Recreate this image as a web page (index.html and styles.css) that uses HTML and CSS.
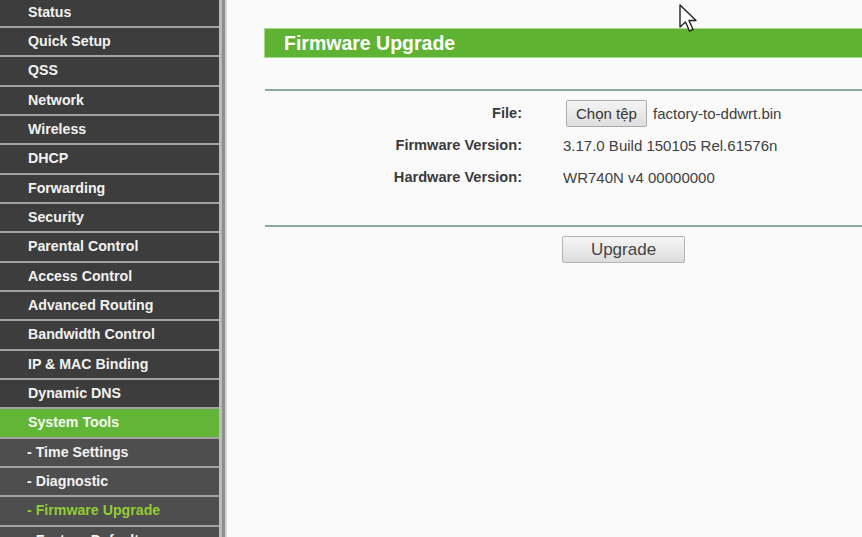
FILE: index.html
```html
<!DOCTYPE html>
<html lang="en">

<head>
  <meta charset="UTF-8">
  <meta name="viewport" content="width=device-width, initial-scale=1.0">
  <title>Firmware Upgrade</title>
  <link rel="stylesheet" href="styles.css">
</head>

<body>
  <div class="page">
    <!-- Left menu frame -->
    <div class="sidebar">
      <ul class="menu">
        <li class="menu-item">Status</li>
        <li class="menu-item">Quick Setup</li>
        <li class="menu-item">QSS</li>
        <li class="menu-item">Network</li>
        <li class="menu-item">Wireless</li>
        <li class="menu-item">DHCP</li>
        <li class="menu-item">Forwarding</li>
        <li class="menu-item">Security</li>
        <li class="menu-item">Parental Control</li>
        <li class="menu-item">Access Control</li>
        <li class="menu-item">Advanced Routing</li>
        <li class="menu-item">Bandwidth Control</li>
        <li class="menu-item">IP &amp; MAC Binding</li>
        <li class="menu-item">Dynamic DNS</li>
        <li class="menu-item active">System Tools</li>
        <li class="menu-item sub">- Time Settings</li>
        <li class="menu-item sub">- Diagnostic</li>
        <li class="menu-item sub current">- Firmware Upgrade</li>
        <li class="menu-item sub">- Factory Defaults</li>
      </ul>
    </div>

    <!-- Main frame -->
    <div class="main">
      <div class="title-bar">Firmware Upgrade</div>
      <div class="rule"></div>

      <div class="form">
        <div class="label">File:</div>
        <div class="value">
          <span class="file-btn">Chọn tệp</span>
          <span class="file-name">factory-to-ddwrt.bin</span>
        </div>

        <div class="label">Firmware Version:</div>
        <div class="value">3.17.0 Build 150105 Rel.61576n</div>

        <div class="label">Hardware Version:</div>
        <div class="value">WR740N v4 00000000</div>
      </div>

      <div class="rule rule-bottom"></div>

      <div class="actions">
        <button class="upgrade-btn">Upgrade</button>
      </div>
    </div>

    <!-- Mouse pointer over the page -->
    <svg class="cursor" width="22" height="30" viewBox="0 0 22 30">
      <path d="M2 2 L2 24 L7.5 19 L11.5 28 L15 26.5 L11 17.5 L18 17.5 Z" fill="#fff" stroke="#222" stroke-width="1.4" stroke-linejoin="round" />
    </svg>
  </div>
</body>

</html>
```

FILE: styles.css
```css
html,
body {
  margin: 0;
  padding: 0;
  height: 100%;
  overflow: hidden;
}

body {
  font-family: "Liberation Sans", Arial, sans-serif;
  background-color: #fbfafa;
  color: #333;
}

.page {
  position: relative;
  display: flex;
  height: 100%;
}

/* sidebar */

.sidebar {
  width: 219px;
  flex-shrink: 0;
  background-color: #4c4c4c;
  box-shadow: 3px 0 0 #bcbcbc, 6px 0 0 #8e8e8e, 8px 0 0 #d6d6d6;
  overflow: hidden;
}

.menu {
  list-style: none;
  margin: -1.4px 0 0;
  padding: 0;
}

.menu-item {
  height: 27.35px;
  line-height: 27.35px;
  padding-left: 28px;
  background-color: #3d3d3d;
  border-bottom: 2px solid #a3a3a3;
  color: #f2f2f2;
  font-size: 14.2px;
  font-weight: bold;
  white-space: nowrap;
}

.menu-item.active {
  background-color: #62b536;
  color: #f4f8ee;
}

.menu-item.sub {
  padding-left: 27px;
  background-color: #4e4e4e;
}

.menu-item.current {
  color: #93cc34;
}

/* main area */

.main {
  flex: 1;
  padding: 29px 0 0 46px;
}

.title-bar {
  height: 28px;
  line-height: 28px;
  padding-left: 19px;
  background-color: #5eb332;
  box-shadow: 0 0 0 1px #a9d98f;
  color: #fff;
  font-size: 19.5px;
  font-weight: bold;
}

.rule {
  margin-top: 32px;
  height: 2px;
  background-color: #86a99b;
}

.rule-bottom {
  margin-top: 32px;
}

.form {
  display: grid;
  grid-template-columns: 257px 1fr;
  grid-auto-rows: 32px;
  column-gap: 41px;
  margin-top: 6px;
  align-items: center;
}

.label {
  text-align: right;
  font-size: 14.6px;
  font-weight: bold;
  color: #3a3a3a;
}

.value {
  font-size: 15px;
  color: #404040;
  white-space: nowrap;
}

.file-btn {
  display: inline-block;
  margin-left: 3px;
  padding: 3px 9px;
  height: 19px;
  line-height: 19px;
  background: linear-gradient(#f4f4f4, #dedede);
  border: 1px solid #acacac;
  border-radius: 2px;
  color: #333;
}

.file-name {
  margin-left: 2px;
}

.actions {
  margin-top: 9px;
  padding-left: 297px;
}

.upgrade-btn {
  width: 123px;
  height: 27px;
  padding: 0;
  background: linear-gradient(#f6f6f6, #dcdcdc);
  border: 1px solid #b4b4b4;
  border-radius: 2px;
  font-family: "Liberation Sans", Arial, sans-serif;
  font-size: 17px;
  color: #444;
}

.cursor {
  position: absolute;
  left: 678px;
  top: 3px;
}
```
